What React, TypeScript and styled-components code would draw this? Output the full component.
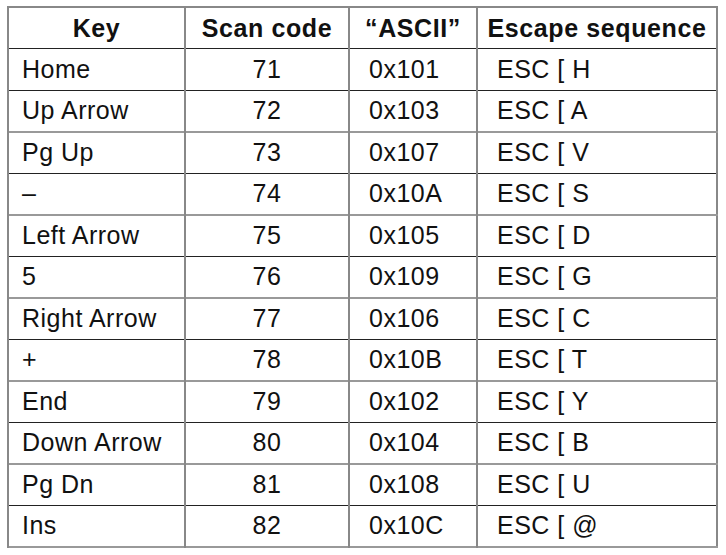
import styled, {createGlobalStyle} from "styled-components";

const GlobalStyle = createGlobalStyle`
  html, body {
    margin: 0;
    padding: 0;
    background: #fff;
  }
`

const Page = styled.div`
  width: 726px;
  height: 555px;
  padding: 6px 0 0 7px;
  box-sizing: border-box;
  font-family: "Liberation Sans", Arial, sans-serif;
  color: #111;
`

const Table = styled.table`
  border-collapse: collapse;
  table-layout: fixed;
  width: 709px;
  border: 2px solid #888;
`

const Col = styled.col<{ $w: number }>`
  width: ${p => p.$w}px;
`

const HeadCell = styled.th`
  height: 40px;
  padding: 0;
  font-size: 25px;
  font-weight: bold;
  letter-spacing: 0.6px;
  text-align: center;
  border-left: 2px solid #888;
  border-bottom: 1px solid #222;
  white-space: nowrap;
`

const Row = styled.tr<{ $dark: boolean }>`
  height: 41.5px;
  border-bottom: ${p => (p.$dark ? "1px solid #222" : "2px solid #999")};
`

const Cell = styled.td<{ $align: "left" | "center"; $pad: number }>`
  padding: 0 0 0 ${p => p.$pad}px;
  font-size: 25px;
  letter-spacing: 0.5px;
  text-align: ${p => p.$align};
  border-left: 2px solid #888;
  white-space: nowrap;
`

const rows = [
  ["Home", "71", "0x101", "ESC [ H"],
  ["Up Arrow", "72", "0x103", "ESC [ A"],
  ["Pg Up", "73", "0x107", "ESC [ V"],
  ["\u2013", "74", "0x10A", "ESC [ S"],
  ["Left Arrow", "75", "0x105", "ESC [ D"],
  ["5", "76", "0x109", "ESC [ G"],
  ["Right Arrow", "77", "0x106", "ESC [ C"],
  ["+", "78", "0x10B", "ESC [ T"],
  ["End", "79", "0x102", "ESC [ Y"],
  ["Down Arrow", "80", "0x104", "ESC [ B"],
  ["Pg Dn", "81", "0x108", "ESC [ U"],
  ["Ins", "82", "0x10C", "ESC [ @"],
]

const App = () => {
  return (
    <Page>
      <GlobalStyle/>
      <Table>
        <colgroup>
          <Col $w={177}/>
          <Col $w={164}/>
          <Col $w={128}/>
          <Col $w={240}/>
        </colgroup>
        <thead>
          <tr>
            <HeadCell>Key</HeadCell>
            <HeadCell>Scan code</HeadCell>
            <HeadCell>{"\u201CASCII\u201D"}</HeadCell>
            <HeadCell>Escape sequence</HeadCell>
          </tr>
        </thead>
        <tbody>
          {rows.map((r, i) => (
            <Row key={r[0]} $dark={i % 2 === 0}>
              <Cell $align="left" $pad={13}>{r[0]}</Cell>
              <Cell $align="center" $pad={0}>{r[1]}</Cell>
              <Cell $align="left" $pad={19}>{r[2]}</Cell>
              <Cell $align="left" $pad={19}>{r[3]}</Cell>
            </Row>
          ))}
        </tbody>
      </Table>
    </Page>
  )
}

export default App
